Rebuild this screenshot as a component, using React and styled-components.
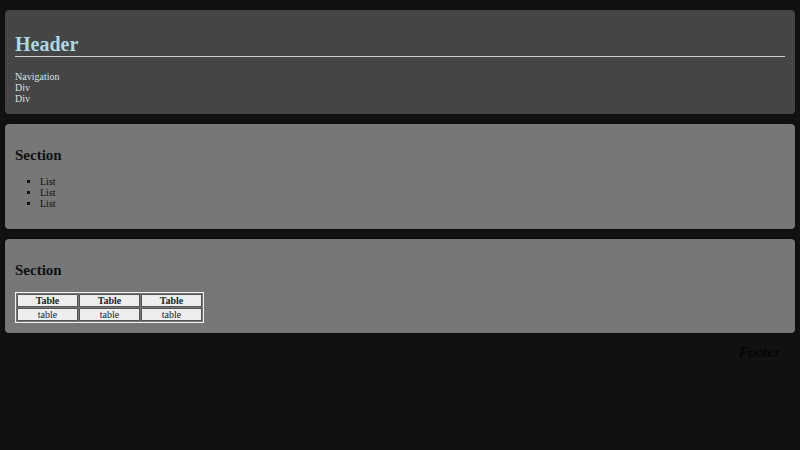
import React from "react";
import styled, { createGlobalStyle } from "styled-components";

const Global = createGlobalStyle`
  html, body { margin: 0; padding: 0; background: #111111; }
  body { font-family: "Liberation Serif", "Times New Roman", serif; font-size: 10px; color: #111; }
`;

const Page = styled.div`
  display: flex;
  flex-direction: column;
  gap: 10px;
  padding: 10px 5px 0;
`;

const Box = styled.div`
  background: ${(p) => p.$bg};
  border-radius: 4px;
  padding: 10px;
  box-shadow: 0 0 2px rgba(0, 0, 0, 0.6);
`;

const Title = styled.h1`
  font-size: 20px;
  font-weight: bold;
  color: #add8e6;
  margin: 13.4px 0;
  border-bottom: 1px solid #cccccc;
  line-height: normal;
`;

const NavLine = styled.div`
  color: #d4e2ec;
  font-size: 10px;
`;

const SectionTitle = styled.h2`
  font-size: 15px;
  font-weight: bold;
  color: #111;
  margin: 13px 0 ${(p) => (p.$tight ? "12px" : "13px")};
`;

const List = styled.ul`
  list-style: square;
  margin: 10px 0;
  padding-left: 25px;
  color: #111;
`;

const Table = styled.table`
  border: 1px solid #f0f0f0;
  border-spacing: 1px;
  margin: 0;
`;

const Cell = styled.td`
  width: 59px;
  background: #eeeeee;
  border: 1px solid #555;
  text-align: center;
  font-size: 10px;
  padding: 0;
  color: #222;
  font-weight: ${(p) => (p.$head ? "bold" : "normal")};
`;

const Footer = styled.footer`
  text-align: right;
  font-style: italic;
  font-size: 15px;
  color: #000;
  margin-top: 1px;
  padding: 0 15px;
`;

export default function App() {
  return (
    <>
      <Global />
      <Page>
        <Box $bg="#454545">
          <Title>Header</Title>
          <NavLine>Navigation</NavLine>
          <NavLine>Div</NavLine>
          <NavLine>Div</NavLine>
        </Box>
        <Box $bg="#777777">
          <SectionTitle $tight>Section</SectionTitle>
          <List>
            <li>List</li>
            <li>List</li>
            <li>List</li>
          </List>
        </Box>
        <Box $bg="#777777">
          <SectionTitle>Section</SectionTitle>
          <Table>
            <tbody>
              <tr>
                <Cell as="th" $head>Table</Cell>
                <Cell as="th" $head>Table</Cell>
                <Cell as="th" $head>Table</Cell>
              </tr>
              <tr>
                <Cell>table</Cell>
                <Cell>table</Cell>
                <Cell>table</Cell>
              </tr>
            </tbody>
          </Table>
        </Box>
        <Footer>Footer</Footer>
      </Page>
    </>
  );
}
